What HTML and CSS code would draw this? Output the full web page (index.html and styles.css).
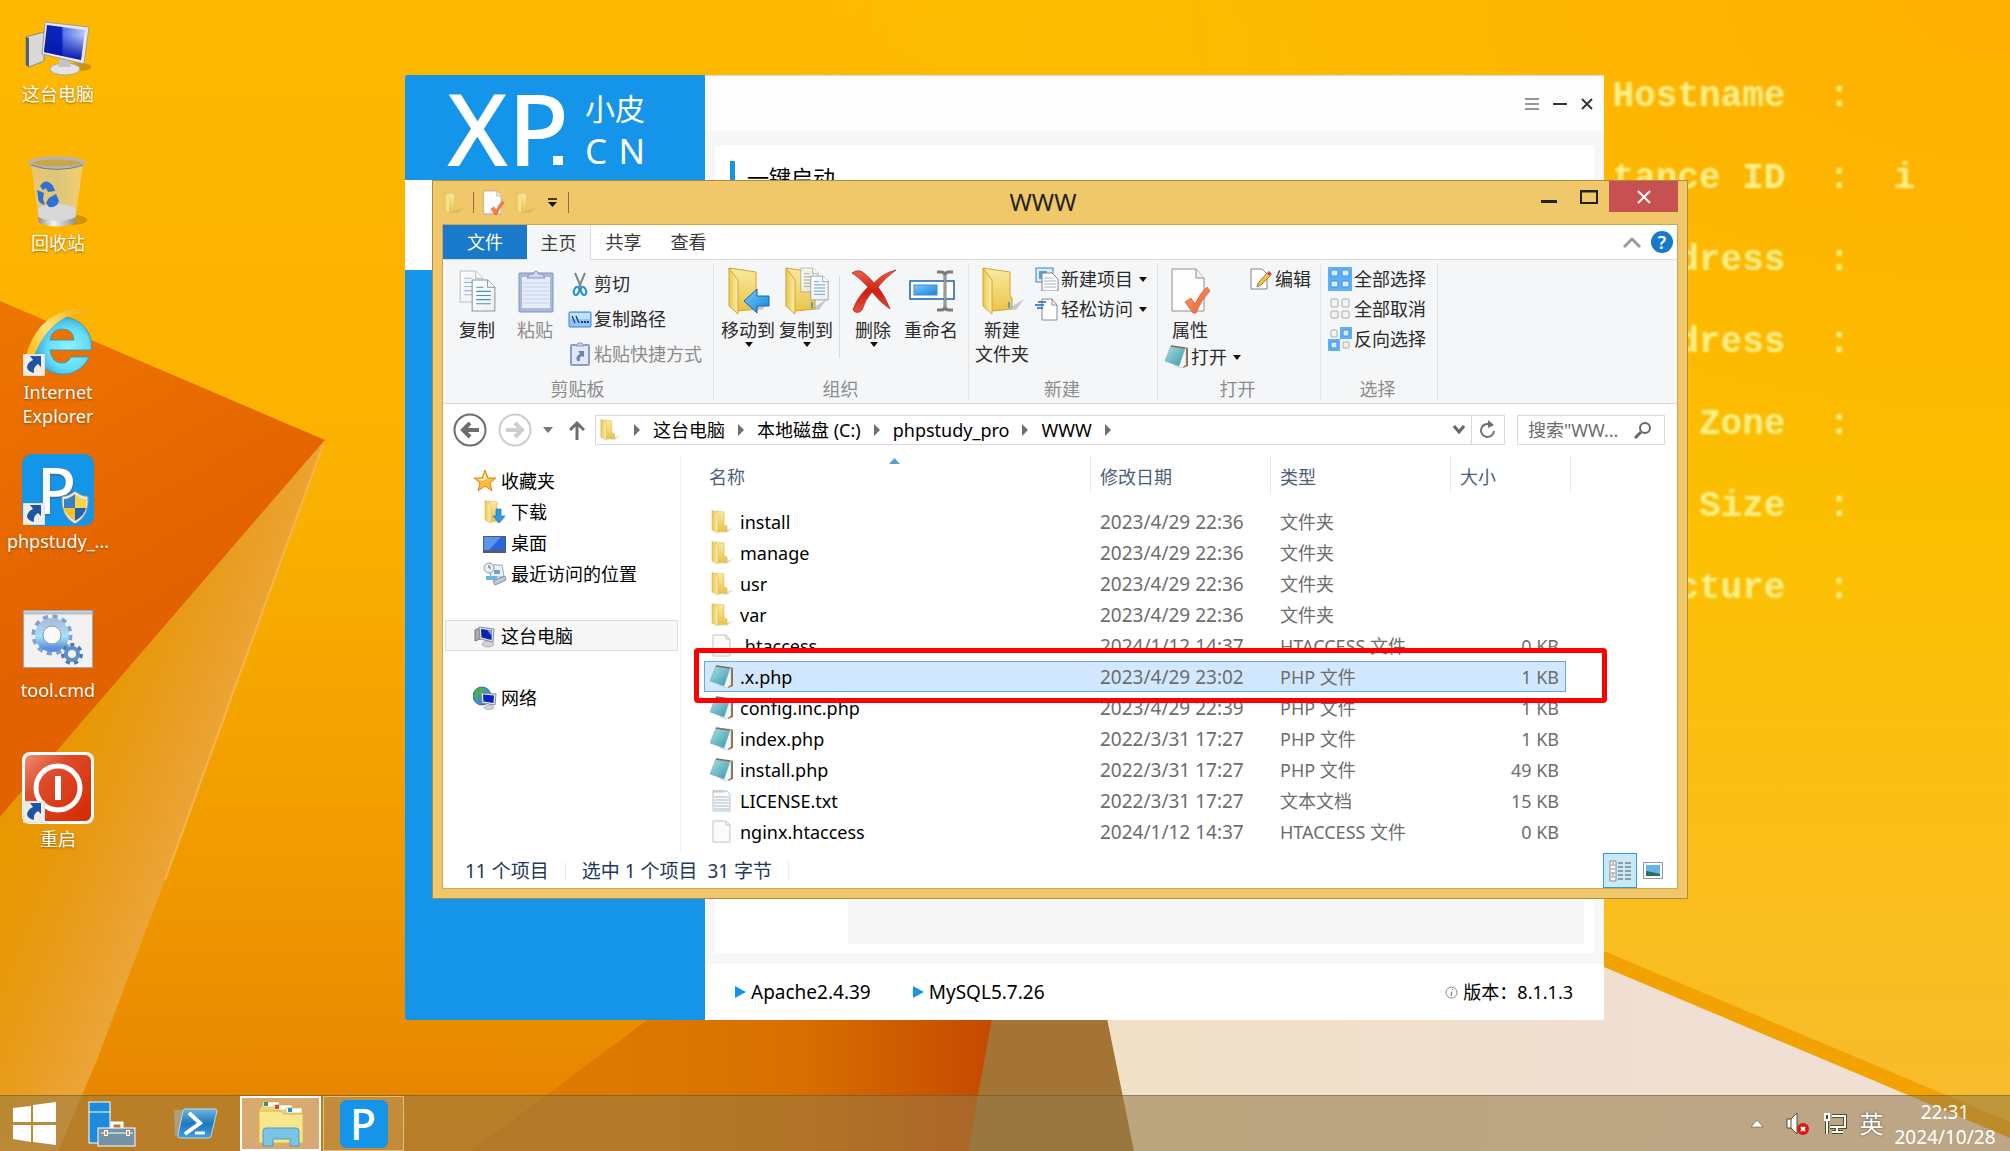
FILE: index.html
```html
<!DOCTYPE html>
<html lang="zh-CN">
<head>
<meta charset="utf-8">
<title>WWW</title>
<link rel="stylesheet" href="styles.css">
</head>
<body>

<!-- Shared gradients and icon symbols -->
<svg class="sprite" aria-hidden="true">
  <defs>
    <linearGradient id="gFolderFront" x1="0" y1="0" x2="1" y2="0"><stop offset="0" stop-color="#e9c64d"/><stop offset="1" stop-color="#fdf0ae"/></linearGradient>
    <linearGradient id="gFolderBack" x1="0" y1="0" x2="0" y2="1"><stop offset="0" stop-color="#fbeaa2"/><stop offset="1" stop-color="#e9c448"/></linearGradient>
    <linearGradient id="gSky" x1="0" y1="0" x2="1" y2="1"><stop offset="0" stop-color="#7cc8fb"/><stop offset="1" stop-color="#0f86dc"/></linearGradient>
    <linearGradient id="gScreen" x1="0" y1="0" x2="1" y2="0"><stop offset="0" stop-color="#0a22a8"/><stop offset=".42" stop-color="#0b22c4"/><stop offset=".48" stop-color="#5a78e8"/><stop offset="1" stop-color="#b9c8fa"/></linearGradient>
    <linearGradient id="gScreenFade" x1="0" y1="0" x2="0" y2="1"><stop offset=".3" stop-color="#0a18b0" stop-opacity="0"/><stop offset="1" stop-color="#0512a8"/></linearGradient>
    <linearGradient id="gMetal" x1="0" y1="0" x2="1" y2="0"><stop offset="0" stop-color="#8d8d8d"/><stop offset=".4" stop-color="#f4f4f4"/><stop offset="1" stop-color="#8f8f8f"/></linearGradient>
    <linearGradient id="gTeal" x1="0" y1="0" x2="1" y2="1"><stop offset="0" stop-color="#b5e0e6"/><stop offset="1" stop-color="#2f97a9"/></linearGradient>
    <radialGradient id="gIE" cx=".6" cy=".55" r=".6"><stop offset="0" stop-color="#8ff4ff"/><stop offset=".6" stop-color="#66dcf8"/><stop offset="1" stop-color="#2fa5dd"/></radialGradient>
    <linearGradient id="gGold" x1="0" y1="1" x2="1" y2="0"><stop offset="0" stop-color="#ffb400"/><stop offset=".5" stop-color="#ffe27a"/><stop offset="1" stop-color="#f5a800"/></linearGradient>
    <linearGradient id="gGear" x1="0" y1="0" x2="0" y2="1"><stop offset="0" stop-color="#a9bfe2"/><stop offset=".55" stop-color="#a6e3f6"/><stop offset="1" stop-color="#5d8fe0"/></linearGradient>
    <linearGradient id="gRed" x1="0" y1="0" x2="1" y2="1"><stop offset="0" stop-color="#f08a70"/><stop offset=".35" stop-color="#de4a2a"/><stop offset="1" stop-color="#d22a00"/></linearGradient>
    <linearGradient id="gCross" x1="0" y1="0" x2="0" y2="1"><stop offset="0" stop-color="#f0604a"/><stop offset=".5" stop-color="#cf1f12"/><stop offset="1" stop-color="#e8503c"/></linearGradient>
    <linearGradient id="gPaper" x1="0" y1="0" x2="1" y2="1"><stop offset="0" stop-color="#fff"/><stop offset="1" stop-color="#eceff2"/></linearGradient>
    <linearGradient id="gBin" x1="0" y1="0" x2="1" y2="0"><stop offset="0" stop-color="#e8c86e"/><stop offset=".5" stop-color="#dcc67e"/><stop offset="1" stop-color="#f3cd6c"/></linearGradient>
    <linearGradient id="gPs" x1="0" y1="0" x2="0" y2="1"><stop offset="0" stop-color="#6db4e2"/><stop offset=".5" stop-color="#1f78bd"/><stop offset="1" stop-color="#3fa0dc"/></linearGradient>
    <linearGradient id="gOrange" x1="0" y1="0" x2="1" y2="1"><stop offset="0" stop-color="#ff9b5c"/><stop offset="1" stop-color="#e5603a"/></linearGradient>
  </defs>

  <symbol id="folder" viewBox="0 0 24 24">
    <path d="M12 22 L24 17 L17 23 Z" fill="#999" opacity=".35"/>
    <path d="M5 1 L14 2 V15 L17 16 V21 L8 22 Z" fill="url(#gFolderBack)" stroke="#d9b650" stroke-width=".6"/>
    <path d="M2 0 L8 4 V23 L2 20 Z" fill="url(#gFolderFront)" stroke="#dcbb58" stroke-width=".6"/>
  </symbol>
  <symbol id="folder-big" viewBox="0 0 42 48">
    <path d="M26 42 L42 32 L34 43 Z" fill="#777" opacity=".35"/>
    <path d="M1 1 L28 5 V29 L30 31 V42 L10 44 Z" fill="url(#gFolderBack)" stroke="#d3a52c"/>
    <path d="M1 1 L10 13 V47 L1 39 Z" fill="url(#gFolderFront)" stroke="#d3a52c"/>
    <path d="M27 35 v6" stroke="#49a2e8" stroke-width="2"/>
  </symbol>
  <symbol id="page" viewBox="0 0 24 32">
    <path d="M1 1 H16 L23 8 V31 H1 Z" fill="url(#gPaper)" stroke="#8d9399"/>
    <path d="M16 1 V8 H23" fill="#fff" stroke="#8d9399"/>
    <path d="M5 8 h7 M5 12 h14 M5 16 h14 M5 20 h14 M5 24 h14" stroke="#4b8cc7"/>
  </symbol>
  <symbol id="copy" viewBox="0 0 38 42">
    <g opacity=".55"><use href="#page" x="0" y="0" width="25" height="33"/></g>
    <use href="#page" x="12" y="9" width="25" height="33"/>
  </symbol>
  <symbol id="paste" viewBox="0 0 36 44">
    <rect x="1" y="4" width="34" height="39" rx="1" fill="#a9b9d9" stroke="#8395bd"/>
    <rect x="4" y="8" width="28" height="31" fill="#e6edfa"/>
    <path d="M5 14h26M5 18h26M5 22h26M5 26h26M5 30h26M5 34h26" stroke="#c3d0e8"/>
    <path d="M9 9 L12 5 H15 Q18 -1 21 5 H24 L27 9 Z" fill="#cfd9eb" stroke="#8395bd"/>
  </symbol>
  <symbol id="cut" viewBox="0 0 24 24">
    <path d="M7 1 L13 15 M17 1 L11 15" stroke="#7d8791" stroke-width="2" fill="none"/>
    <ellipse cx="8.500" cy="19" rx="2.500" ry="4" transform="rotate(20 8.500 19)" fill="none" stroke="#1c93d2" stroke-width="2"/>
    <ellipse cx="15.500" cy="19" rx="2.500" ry="4" transform="rotate(-20 15.500 19)" fill="none" stroke="#1c93d2" stroke-width="2"/>
  </symbol>
  <symbol id="path" viewBox="0 0 24 24">
    <rect x="1" y="5" width="22" height="15" rx="1" fill="#8fc5fb" stroke="#3f83d0"/>
    <rect x="2" y="6" width="20" height="6" fill="#c0e0ff"/>
    <path d="M4 9 l3 7 M8 9 l3 7" stroke="#163a66" stroke-width="1.300"/>
    <path d="M13 15h2M16 15h2M19 15h2" stroke="#163a66" stroke-width="2"/>
  </symbol>
  <symbol id="paste-link" viewBox="0 0 24 24">
    <rect x="3" y="3" width="18" height="20" rx="1" fill="#e2e9f6" stroke="#8c9cc4" stroke-width="2"/>
    <path d="M8 4 L10 1 H14 L16 4 Z" fill="#c6d0e6" stroke="#8c9cc4"/>
    <path d="M9 19 Q7 14 12 12 L10 9 H16 V15 L14 14 Q11 15 12 19 Z" fill="#6e82ad"/>
  </symbol>
  <symbol id="move-to" viewBox="0 0 42 48">
    <use href="#folder-big" width="42" height="48"/>
    <path d="M16 34 L29 22 V29 H41 V39 H29 V46 Z" fill="url(#gSky)" stroke="#0e66b0"/>
  </symbol>
  <symbol id="copy-to" viewBox="0 0 44 48">
    <use href="#folder-big" width="42" height="48"/>
    <g opacity=".75"><use href="#page" x="15" y="0" width="19" height="26"/></g>
    <use href="#page" x="25" y="8" width="19" height="26"/>
  </symbol>
  <symbol id="delete" viewBox="0 0 46 44">
    <path d="M1 4 Q8 -1 14 5 Q20 10 23 14 Q32 4 45 1 Q34 9 27 18 Q34 27 39 40 Q30 34 21 23 Q14 31 11 41 Q6 46 2 41 Q5 30 17 18 Q9 9 1 4Z" fill="url(#gCross)" stroke="#a51a10" stroke-width=".7"/>
  </symbol>
  <symbol id="rename" viewBox="0 0 46 42">
    <rect x="1" y="11" width="44" height="18" fill="#fff" stroke="#1762a5" stroke-width="1.500"/>
    <rect x="5" y="15" width="23" height="10" fill="url(#gSky)" stroke="#3e8bcb"/>
    <path d="M28 2 H32 Q36 2 36 6 Q36 2 40 2 H44 M36 5 V37 M28 40 H32 Q36 40 36 36 Q36 40 40 40 H44" fill="none" stroke="#7b7b7b" stroke-width="3"/>
    <path d="M36 5 V37" stroke="#b8b8b8" stroke-width="1"/>
  </symbol>
  <symbol id="new-item" viewBox="0 0 24 24">
    <rect x="1" y="1" width="17" height="14" fill="#d9ecfb" stroke="#3a86c8"/>
    <path d="M4 4 h8 v8 h-8z" fill="#5d9fd8"/>
    <path d="M7 6 H17 L23 12 V24 H7 Z" fill="#fff" stroke="#7d858c"/>
    <path d="M9 11h8M9 14h12M9 17h12M9 20h12" stroke="#a9b4bd"/>
  </symbol>
  <symbol id="easy-access" viewBox="0 0 24 24">
    <path d="M7 2 H17 L22 8 V23 H7 Z" fill="#fff" stroke="#858c92"/>
    <path d="M17 2 V8 H22" fill="none" stroke="#858c92"/>
    <path d="M3 5h8M0 8h9M2 11h6" stroke="#1769c4" stroke-width="1.300"/>
  </symbol>
  <symbol id="properties" viewBox="0 0 40 48">
    <path d="M1 2 H25 L33 11 V44 H1 Z" fill="#fdfdfd" stroke="#8b9094"/>
    <path d="M25 2 V11 H33" fill="#f0f0f0" stroke="#8b9094"/>
    <path d="M14 35 L20 31 L24 37 Q29 26 36 20 L39 24 Q30 33 25 46 H22 Z" fill="url(#gOrange)" stroke="#d9572f" stroke-width=".7"/>
  </symbol>
  <symbol id="notepad" viewBox="0 0 24 24">
    <path d="M20 2 L23 3 L23 21 L18 23 Z" fill="#8d6f45"/>
    <path d="M18 2 L21 3 L21 20 L16 23 L10 21 Z" fill="#f2f5f6" stroke="#aab3b6" stroke-width=".5"/>
    <path d="M6 1 L20 3 L14 21 L0 16 Z" fill="url(#gTeal)" stroke="#6ba9b3" stroke-width=".6"/>
    <path d="M6 1 L20 3" stroke="#7e6f58" stroke-width="1.500"/>
  </symbol>
  <symbol id="edit" viewBox="0 0 24 24">
    <path d="M2 2 H13 L18 7 V22 H2 Z" fill="#fff" stroke="#7f868c"/>
    <path d="M8 20 L9 16 L18 6 L21 9 L12 18 Z" fill="#f3c44a" stroke="#8a6a25" stroke-width=".8"/>
    <path d="M18 6 l2 -2 l3 3 l-2 2z" fill="#d8485c"/>
  </symbol>
  <symbol id="select-all" viewBox="0 0 24 24">
    <rect width="24" height="24" fill="#5fb0fb"/>
    <g fill="#d8edff" stroke="#3a8fe2"><rect x="3" y="3" width="7" height="6" rx="1"/><rect x="14" y="3" width="7" height="6" rx="1"/><rect x="3" y="14" width="7" height="6" rx="1"/><rect x="14" y="14" width="7" height="6" rx="1"/></g>
  </symbol>
  <symbol id="select-none" viewBox="0 0 24 24">
    <g fill="#f3f3f3" stroke="#ababab"><rect x="3" y="2" width="7" height="8" rx="1"/><rect x="14" y="2" width="7" height="8" rx="1"/><rect x="3" y="14" width="7" height="7" rx="1"/><rect x="14" y="14" width="7" height="7" rx="1"/></g>
  </symbol>
  <symbol id="select-invert" viewBox="0 0 24 24">
    <rect x="12" width="12" height="12" fill="#5fb0fb"/><rect y="12" width="12" height="12" fill="#5fb0fb"/>
    <g fill="#f3f3f3" stroke="#ababab"><rect x="3" y="3" width="6" height="7" rx="1"/><rect x="15" y="15" width="6" height="6" rx="1"/></g>
    <g fill="#d8edff" stroke="#3a8fe2"><rect x="15" y="3" width="6" height="6" rx="1"/><rect x="3" y="15" width="6" height="6" rx="1"/></g>
  </symbol>
  <symbol id="star" viewBox="0 0 24 24">
    <path d="M12 1 L15 9 L23 9 L17 14 L19 22 L12 17 L5 22 L7 14 L1 9 L9 9 Z" fill="#fdbb3c" stroke="#e0861a" stroke-linejoin="round"/>
    <path d="M12 4 L14 10 L9 12 L5 10 L10 10 Z" fill="#fff0b8"/>
  </symbol>
  <symbol id="downloads" viewBox="0 0 24 24">
    <use href="#folder" width="24" height="24"/>
    <path d="M13 9 H18 V16 H22 L16 23 L10 16 H13 Z" fill="#2c9ae6" stroke="#0d68b5" stroke-width=".6"/>
  </symbol>
  <symbol id="desktop" viewBox="0 0 24 24">
    <rect x="0" y="5" width="23" height="17" fill="#4d5d78"/>
    <rect x="1" y="6" width="21" height="13" fill="#2a66d8"/>
    <path d="M1 6 H18 L6 19 H1 Z" fill="#5c94ec"/>
  </symbol>
  <symbol id="recent" viewBox="0 0 24 24">
    <path d="M6 3 H19 L21 15 H8 Z" fill="#eef3f7" stroke="#9aa7b0"/>
    <circle cx="6" cy="6" r="5" fill="#e9eff4" stroke="#8fa0ad"/>
    <path d="M6 3v3h2" fill="none" stroke="#4f6473"/>
    <path d="M3 14 H14 V18 H3 Z" fill="#69b8d6"/>
    <path d="M10 19 L22 14 L23 18 L12 23 Z" fill="#c3c9ce" stroke="#87919a"/>
    <path d="M11 8h6v4h-6z" fill="#6ea5cf"/>
  </symbol>
  <symbol id="pc" viewBox="0 0 66 56">
    <ellipse cx="54" cy="46" rx="13" ry="4" fill="#8a6410" opacity=".4"/>
    <path d="M1 16 L19 11 V40 L4 46 L1 44 Z" fill="#d9d9d9" stroke="#8a8a8a"/>
    <path d="M1 16 L4 17 V46 L1 44 Z" fill="#555f66"/>
    <ellipse cx="40" cy="48" rx="15" ry="6" fill="#e3e3e3" stroke="#a9a9a9"/>
    <path d="M35 38 h9 l2 8 h-13z" fill="#c4c4c4"/>
    <path d="M20 1 L64 6 L59 43 L17 33 Z" fill="#e6e6e6" stroke="#9c9c9c"/>
    <path d="M22 4 L60 9 L56 39 L19 31 Z" fill="url(#gScreen)"/>
    <path d="M22 4 L60 9 L56 39 L19 31 Z" fill="url(#gScreenFade)"/>
  </symbol>
  <symbol id="pc-small" viewBox="0 0 24 24">
    <path d="M2 6 L7 4 V15 L2 17 Z" fill="#a9adb2" stroke="#777"/>
    <ellipse cx="15" cy="20" rx="6" ry="3" fill="#d2d2d2" stroke="#999" stroke-width=".6"/>
    <path d="M6 3 L21 5 L20 18 L7 15 Z" fill="#e3e5e8" stroke="#858d94"/>
    <path d="M8 5 L19 6.500 L18.500 16 L8.500 13.500 Z" fill="#0b20b4"/>
    <path d="M14 5.700 L19 6.500 L18.700 12 Z" fill="#7f95ea"/>
  </symbol>
  <symbol id="network" viewBox="0 0 24 24">
    <circle cx="9" cy="10" r="9" fill="#3f8fd2" stroke="#2d6ba4"/>
    <path d="M3 4 Q9 0 12 3 Q9 8 6 8 Q6 13 3 14 Q-1 9 3 4Z" fill="#4fae4b"/>
    <path d="M8 7 L23 8 L22 19 L9 17 Z" fill="#e5e8ea" stroke="#858d94"/>
    <path d="M10 8.500 L21 9.500 L20.500 17 L10.500 15.500 Z" fill="#0d25c0"/>
    <ellipse cx="16" cy="21.500" rx="5" ry="2" fill="#d5d5d5" stroke="#999" stroke-width=".6"/>
  </symbol>
  <symbol id="file" viewBox="0 0 24 24">
    <path d="M3 1 H16 L20 5 V22 H3 Z" fill="#fbfbf9" stroke="#c3c3c0"/>
    <path d="M16 1 V5 H20" fill="none" stroke="#c3c3c0"/>
  </symbol>
  <symbol id="text-file" viewBox="0 0 24 24">
    <path d="M3 2 H17 L20 5 V22 H3 Z" fill="#f8fafb" stroke="#bcc1c4"/>
    <path d="M4 1v3M7 1v3M10 1v3M13 1v3" stroke="#aab1b6"/>
    <path d="M4 8h15M4 11h15M4 14h15M4 17h15M4 20h15" stroke="#a9bdd1"/>
  </symbol>
  <symbol id="shortcut" viewBox="0 0 22 22">
    <rect width="22" height="22" fill="#f1ece6" stroke="#c5b9a8" stroke-width=".5"/>
    <path d="M7 2 H18 V13 L15 10 Q10 13 11 19 Q4 17 4 13 Q5 8 10 6 Z" fill="#1d55a5"/>
  </symbol>
  <symbol id="caret-down" viewBox="0 0 8 5"><path d="M0 0 H8 L4 5 Z" fill="currentColor"/></symbol>
  <symbol id="caret-right" viewBox="0 0 6 12"><path d="M0 0 L6 6 L0 12 Z" fill="currentColor"/></symbol>
</svg>

<main class="desktop">
  <!-- Wallpaper -->
  <svg class="wallpaper" viewBox="0 0 2010 1151" preserveAspectRatio="none" aria-hidden="true">
    <defs>
      <linearGradient id="wBase" x1="0" y1="0" x2="0" y2="1"><stop offset="0" stop-color="#ffb900"/><stop offset=".45" stop-color="#fab000"/><stop offset=".75" stop-color="#f09a00"/><stop offset="1" stop-color="#e68200"/></linearGradient>
      <linearGradient id="wRight" x1="0" y1="0" x2="0" y2="1"><stop offset="0" stop-color="#fdbf00"/><stop offset=".45" stop-color="#fcc000"/><stop offset=".8" stop-color="#f9be1e"/><stop offset="1" stop-color="#f8ba30"/></linearGradient>
      <linearGradient id="wMask" x1="0" y1="0" x2="1" y2="0"><stop offset="0" stop-color="#000"/><stop offset="1" stop-color="#fff"/></linearGradient>
      <mask id="wFade"><rect x="700" width="600" height="1151" fill="url(#wMask)"/><rect x="1299" width="711" height="1151" fill="#fff"/></mask>
      <radialGradient id="wCorner" cx="1" cy="0" r=".5"><stop offset="0" stop-color="#ffa800" stop-opacity=".7"/><stop offset="1" stop-color="#ffa800" stop-opacity="0"/></radialGradient>
      <linearGradient id="wDark" gradientUnits="userSpaceOnUse" x1="0" y1="330" x2="160" y2="620"><stop offset="0" stop-color="#ee7400"/><stop offset=".6" stop-color="#e66800"/><stop offset="1" stop-color="#e26100"/></linearGradient>
      <linearGradient id="wFold" gradientUnits="userSpaceOnUse" x1="70" y1="730" x2="220" y2="790"><stop offset="0" stop-color="#e89800"/><stop offset=".35" stop-color="#e89a14"/><stop offset="1" stop-color="#eca63e"/></linearGradient>
      <linearGradient id="wFlame" gradientUnits="userSpaceOnUse" x1="600" y1="0" x2="990" y2="0"><stop offset="0" stop-color="#dd7a00"/><stop offset=".5" stop-color="#d87000"/><stop offset="1" stop-color="#c64a00"/></linearGradient>
      <linearGradient id="wCream" gradientUnits="userSpaceOnUse" x1="1107" y1="0" x2="1700" y2="0"><stop offset="0" stop-color="#f0e0c6"/><stop offset="1" stop-color="#f0dfd3"/></linearGradient>
    </defs>
    <rect width="2010" height="1151" fill="url(#wBase)"/>
    <rect width="2010" height="1151" fill="url(#wRight)" mask="url(#wFade)"/>
    <rect width="2010" height="1151" fill="url(#wCorner)"/>
    <path d="M0 301 L325 440 L0 817 Z" fill="url(#wDark)"/>
    <path d="M325 440 L0 817 V1151 H58 L97 1060 L165 880 Z" fill="url(#wFold)"/>
    <path d="M323 445 L165 880" stroke="#f6b550" stroke-width="2"/>
    <path d="M650 1018 L540 1100 L470 1151 H980 L992 1018 Z" fill="url(#wFlame)"/>
    <path d="M992 1018 H1107 L1134 1151 H968 Z" fill="#a37436"/>
    <path d="M1107 1018 L1604 966 L2010 1137 V1151 H1134 Z" fill="url(#wCream)"/>
    <path d="M1604 951 L2010 1122 V1138 L1604 967 Z" fill="#f2a302"/>
  </svg>
  <pre class="host-info">Hostname  :   
tance ID  :  i
dress  :   
dress  :   
Zone  :   
Size  :   
cture  :   </pre>

  <nav class="shortcuts" aria-label="桌面">
    <a class="shortcut" href="#"><span class="shortcut-icon shortcut-low"><svg width="66" height="56"><use href="#pc"/></svg></span>这台电脑</a>
    <a class="shortcut" href="#"><span class="shortcut-icon">
      <svg width="60" height="72" viewBox="0 0 60 72">
        <ellipse cx="46" cy="64" rx="13" ry="5" fill="#8a6410" opacity=".4"/>
        <path d="M3 8 L11 66 Q29 74 47 66 L55 8 Z" fill="url(#gBin)"/>
        <path d="M10 52 L11 66 Q29 74 47 66 L48 52 Q29 44 10 52" fill="#d8d8d8"/>
        <path d="M10 61 Q29 69 48 61 L47 67 Q29 74 11 67Z" fill="url(#gMetal)"/>
        <ellipse cx="29" cy="7" rx="27" ry="5" fill="#c9a648" stroke="#b5b5b5" stroke-width="3"/>
        <path d="M3 9 Q29 18 55 9" fill="none" stroke="#7d7d7d"/>
        <g fill="#2f6fd6"><path d="M12 30 Q18 21 25 30 L27 35 L20 36 L18 32 L15 34Z"/><path d="M9 34 L16 37 L15 43 L17 49 Q9 47 10 40Z"/><path d="M21 42 L28 38 L31 45 Q29 52 21 51 L18 47Z"/></g>
      </svg></span>回收站</a>
    <a class="shortcut" href="#"><span class="shortcut-icon">
      <svg width="72" height="72" viewBox="0 0 72 72">
        <path fill-rule="evenodd" d="M69 45 A28.500 28.500 0 1 0 67 52 H49 Q46 58 40 58 Q30 58 28 45 Z M28 35 Q30 24 40 24 Q51 24 52 35 Z" fill="url(#gIE)" stroke="#2f9ccf"/>
        <path d="M3 54 Q14 10 52 4 Q66 2 67 12 Q60 5 46 11 Q22 22 10 56 Z" fill="url(#gGold)"/>
        <use href="#shortcut" x="1" y="49" width="22" height="22"/>
      </svg></span>Internet Explorer</a>
    <a class="shortcut" href="#"><span class="shortcut-icon">
      <svg width="72" height="72" viewBox="0 0 72 72">
        <rect width="72" height="72" rx="10" fill="#1595e9"/>
        <text class="logo-letter" x="15" y="60" font-size="64">P</text>
        <path d="M53 37 Q60 43 66 42 Q68 62 53 70 Q38 62 40 42 Q46 43 53 37Z" fill="#e7ebee" stroke="#8d8d80"/>
        <path d="M53 40 Q47 45 42 45 V54 H53Z" fill="#3b80c4"/><path d="M53 40 Q59 45 64 45 V54 H53Z" fill="#f7d64f"/>
        <path d="M42 54 H53 V67 Q43 61 42 54Z" fill="#f2c32c"/><path d="M64 54 H53 V67 Q63 61 64 54Z" fill="#2462ae"/>
        <use href="#shortcut" x="1" y="49" width="22" height="22"/>
      </svg></span>phpstudy_...</a>
    <a class="shortcut" href="#"><span class="shortcut-icon">
      <svg width="70" height="58" viewBox="0 0 70 58">
        <rect x="0" y="0" width="70" height="58" fill="#f2f2f2" stroke="#9fa7b3" stroke-width="2"/>
        <path d="M1 3 H69" stroke="#b7c2cf" stroke-width="3"/>
        <circle cx="29" cy="25" r="18" fill="none" stroke="#7ea2d4" stroke-width="5" stroke-dasharray="5 4.420"/>
        <circle cx="29" cy="25" r="13" fill="none" stroke="url(#gGear)" stroke-width="8"/>
        <circle cx="29" cy="25" r="9" fill="#fafafa" stroke="#8b9db5"/>
        <circle cx="49" cy="44" r="9" fill="none" stroke="#4779b5" stroke-width="4" stroke-dasharray="4 4.080"/>
        <circle cx="49" cy="44" r="6" fill="#f5f5f5" stroke="#5f90c8" stroke-width="4"/>
      </svg></span>tool.cmd</a>
    <a class="shortcut" href="#"><span class="shortcut-icon">
      <svg width="72" height="72" viewBox="0 0 72 72">
        <rect width="72" height="72" rx="8" fill="#fff"/>
        <rect x="3" y="3" width="66" height="66" rx="6" fill="url(#gRed)"/>
        <circle cx="36" cy="36" r="22" fill="none" stroke="#fff" stroke-width="5"/>
        <rect x="33" y="24" width="6" height="24" fill="#fff"/>
        <use href="#shortcut" x="1" y="49" width="22" height="22"/>
      </svg></span>重启</a>
  </nav>

  <!-- phpStudy panel, behind the file browser -->
  <section class="panel" aria-label="phpStudy">
    <aside class="panel-side">
      <div class="brand"><span class="brand-xp">XP</span><span class="brand-dot"></span>
        <span class="brand-sub"><span>小皮</span><span class="brand-cn"><span>C</span><span>N</span></span></span>
      </div>
      <div class="side-active"></div>
    </aside>
    <div class="panel-main">
      <header class="panel-bar">
        <button aria-label="菜单"><svg width="14" height="14"><path d="M0 2h14M0 7h14M0 12h14" stroke="#333"/></svg></button>
        <button aria-label="最小化"><svg width="14" height="14"><path d="M0 7h14" stroke="#333" stroke-width="2"/></svg></button>
        <button aria-label="关闭"><svg width="12" height="14"><path d="M1 2L11 12M11 2L1 12" stroke="#333" stroke-width="2"/></svg></button>
      </header>
      <div class="panel-body">
        <div class="card"><h2>一键启动</h2><div class="card-log"></div></div>
      </div>
      <footer class="panel-foot">
        <span class="service"><svg width="11" height="12"><path d="M0 0L11 6L0 12Z" fill="#1595e9"/></svg>Apache2.4.39</span>
        <span class="service"><svg width="11" height="12"><path d="M0 0L11 6L0 12Z" fill="#1595e9"/></svg>MySQL5.7.26</span>
        <span class="version"><svg width="13" height="13" viewBox="0 0 13 13"><circle cx="6.500" cy="6.500" r="5.500" fill="none" stroke="#888"/><path d="M7.500 3v1M7 5.500L6 10" stroke="#666"/></svg>版本：8.1.1.3</span>
      </footer>
    </div>
  </section>

  <!-- File browser window -->
  <section class="explorer" aria-label="WWW">
    <header class="titlebar">
      <div class="quick">
        <svg width="22" height="26"><use href="#folder"/></svg><i></i>
        <button aria-label="属性"><svg width="22" height="26"><use href="#properties"/></svg></button>
        <button aria-label="新建文件夹"><svg width="22" height="26"><use href="#folder"/></svg></button>
        <button aria-label="自定义"><svg width="9" height="9"><path d="M0 1h9" stroke="#111" stroke-width="1.500"/><path d="M0 4h9L4.500 9Z" fill="#111"/></svg></button><i></i>
      </div>
      <h1>WWW</h1>
      <div class="controls">
        <button aria-label="最小化"><svg width="16" height="4"><rect width="16" height="3" fill="#222"/></svg></button>
        <button aria-label="最大化"><svg width="18" height="14"><path d="M1 1H17V13H1Z" fill="none" stroke="#222" stroke-width="2"/><path d="M0 2H18" stroke="#222"/></svg></button>
        <button class="close" aria-label="关闭"><svg width="14" height="14"><path d="M1 1L13 13M13 1L1 13" stroke="#fff" stroke-width="2"/></svg></button>
      </div>
    </header>

    <div class="client">
      <div class="tabs">
        <button class="tab tab-file">文件</button>
        <button class="tab tab-active">主页</button>
        <button class="tab">共享</button>
        <button class="tab">查看</button>
        <div class="tab-tools">
          <button aria-label="折叠"><svg width="18" height="14"><path d="M1 12L9 4L17 12" fill="none" stroke="#999" stroke-width="3"/></svg></button>
          <button class="help" aria-label="帮助">?</button>
        </div>
      </div>

      <div class="ribbon">
        <div class="group group-clip">
          <div class="tools">
            <button class="big"><span><svg width="38" height="42"><use href="#copy"/></svg></span>复制</button>
            <button class="big dim"><span><svg width="36" height="44"><use href="#paste"/></svg></span>粘贴</button>
            <div class="stack stack-loose">
              <button class="small"><svg width="24" height="24"><use href="#cut"/></svg>剪切</button>
              <button class="small"><svg width="24" height="24"><use href="#path"/></svg>复制路径</button>
              <button class="small dim"><svg width="24" height="24"><use href="#paste-link"/></svg>粘贴快捷方式</button>
            </div>
          </div>
          <p>剪贴板</p>
        </div>
        <div class="group group-organize">
          <div class="tools">
            <button class="big"><span><svg width="42" height="48"><use href="#move-to"/></svg></span>移动到<svg class="caret" width="8" height="5"><use href="#caret-down"/></svg></button>
            <button class="big"><span><svg width="44" height="48"><use href="#copy-to"/></svg></span>复制到<svg class="caret" width="8" height="5"><use href="#caret-down"/></svg></button>
            <i class="divider"></i>
            <button class="big"><span><svg width="46" height="44"><use href="#delete"/></svg></span>删除<svg class="caret" width="8" height="5"><use href="#caret-down"/></svg></button>
            <button class="big"><span><svg width="46" height="42"><use href="#rename"/></svg></span>重命名</button>
          </div>
          <p>组织</p>
        </div>
        <div class="group group-new">
          <div class="tools">
            <button class="big"><span><svg width="42" height="48"><use href="#folder-big"/></svg></span>新建<br>文件夹</button>
            <div class="stack">
              <button class="small"><svg width="24" height="24"><use href="#new-item"/></svg>新建项目<svg class="caret" width="8" height="5"><use href="#caret-down"/></svg></button>
              <button class="small"><svg width="24" height="24"><use href="#easy-access"/></svg>轻松访问<svg class="caret" width="8" height="5"><use href="#caret-down"/></svg></button>
            </div>
          </div>
          <p>新建</p>
        </div>
        <div class="group group-open">
          <div class="tools">
            <div class="open-column">
              <button class="big"><span><svg width="40" height="48"><use href="#properties"/></svg></span>属性</button>
              <button class="small"><svg width="24" height="24"><use href="#notepad"/></svg>打开<svg class="caret" width="8" height="5"><use href="#caret-down"/></svg></button>
            </div>
            <div class="stack">
              <button class="small"><svg width="24" height="24"><use href="#edit"/></svg>编辑</button>
            </div>
          </div>
          <p>打开</p>
        </div>
        <div class="group group-select">
          <div class="tools">
            <div class="stack">
              <button class="small"><svg width="24" height="24"><use href="#select-all"/></svg>全部选择</button>
              <button class="small"><svg width="24" height="24"><use href="#select-none"/></svg>全部取消</button>
              <button class="small"><svg width="24" height="24"><use href="#select-invert"/></svg>反向选择</button>
            </div>
          </div>
          <p>选择</p>
        </div>
      </div>

      <div class="navbar">
        <button class="nav-back" aria-label="后退"><svg width="34" height="34"><circle cx="17" cy="17" r="15.500" fill="none" stroke="#6d6d6d" stroke-width="2"/><path d="M26 17H11M17 10L10 17L17 24" fill="none" stroke="#6d6d6d" stroke-width="4"/></svg></button>
        <button class="nav-forward" aria-label="前进"><svg width="34" height="34"><circle cx="17" cy="17" r="15.500" fill="none" stroke="#cdcdcd" stroke-width="2"/><path d="M8 17H23M17 10L24 17L17 24" fill="none" stroke="#cdcdcd" stroke-width="4"/></svg></button>
        <button class="nav-history" aria-label="历史"><svg width="10" height="6"><path d="M0 0H10L5 6Z" fill="#777"/></svg></button>
        <button class="nav-up" aria-label="向上"><svg width="16" height="20"><path d="M8 20V4M1 10L8 3L15 10" fill="none" stroke="#6d6d6d" stroke-width="3"/></svg></button>
        <div class="address">
          <svg width="22" height="24"><use href="#folder"/></svg>
          <svg class="crumb-arrow" width="6" height="12"><use href="#caret-right"/></svg>
          <button>这台电脑</button>
          <svg class="crumb-arrow" width="6" height="12"><use href="#caret-right"/></svg>
          <button>本地磁盘 (C:)</button>
          <svg class="crumb-arrow" width="6" height="12"><use href="#caret-right"/></svg>
          <button>phpstudy_pro</button>
          <svg class="crumb-arrow" width="6" height="12"><use href="#caret-right"/></svg>
          <button>WWW</button>
          <svg class="crumb-arrow" width="6" height="12"><use href="#caret-right"/></svg>
          <div class="address-end">
            <button aria-label="展开"><svg width="12" height="10"><path d="M1 1L6 7L11 1" fill="none" stroke="#666" stroke-width="3"/></svg></button>
            <button class="refresh" aria-label="刷新"><svg width="18" height="20"><path d="M12 5A6.500 6.500 0 1 0 15 11" fill="none" stroke="#707070" stroke-width="2"/><path d="M9 0V8L15 5Z" fill="#707070"/></svg></button>
          </div>
        </div>
        <label class="search"><input type="text" placeholder="搜索&quot;WW..." aria-label="搜索">
          <svg width="18" height="18"><circle cx="11" cy="7" r="5" fill="none" stroke="#666" stroke-width="2"/><path d="M7 11L1 17" stroke="#666" stroke-width="3"/></svg></label>
      </div>

      <div class="content">
        <nav class="tree" aria-label="导航">
          <a href="#"><svg width="24" height="24"><use href="#star"/></svg>收藏夹</a>
          <a href="#" class="child"><svg width="24" height="24"><use href="#downloads"/></svg>下载</a>
          <a href="#" class="child"><svg width="24" height="24"><use href="#desktop"/></svg>桌面</a>
          <a href="#" class="child"><svg width="24" height="24"><use href="#recent"/></svg>最近访问的位置</a>
          <a href="#" class="tree-root tree-current"><svg width="24" height="24"><use href="#pc-small"/></svg>这台电脑</a>
          <a href="#" class="tree-root"><svg width="24" height="24"><use href="#network"/></svg>网络</a>
        </nav>
        <div class="listing">
          <table>
            <colgroup><col class="c-name"><col class="c-date"><col class="c-type"><col class="c-size"><col class="c-end"></colgroup>
            <thead><tr>
              <th><div>名称<svg class="sort" width="11" height="6"><path d="M0 6L5.500 0L11 6Z" fill="#5f9fc4"/></svg></div></th>
              <th><div>修改日期</div></th><th><div>类型</div></th><th colspan="2"><div>大小</div></th>
            </tr></thead>
            <tbody>
              <tr><td><svg width="24" height="24"><use href="#folder"/></svg>install</td><td>2023/4/29 22:36</td><td>文件夹</td><td></td></tr>
              <tr><td><svg width="24" height="24"><use href="#folder"/></svg>manage</td><td>2023/4/29 22:36</td><td>文件夹</td><td></td></tr>
              <tr><td><svg width="24" height="24"><use href="#folder"/></svg>usr</td><td>2023/4/29 22:36</td><td>文件夹</td><td></td></tr>
              <tr><td><svg width="24" height="24"><use href="#folder"/></svg>var</td><td>2023/4/29 22:36</td><td>文件夹</td><td></td></tr>
              <tr><td><svg width="24" height="24"><use href="#file"/></svg>.htaccess</td><td>2024/1/12 14:37</td><td>HTACCESS 文件</td><td>0 KB</td></tr>
              <tr class="selected"><td><svg width="24" height="24"><use href="#notepad"/></svg>.x.php<span class="marker"></span></td><td>2023/4/29 23:02</td><td>PHP 文件</td><td>1 KB</td></tr>
              <tr><td><svg width="24" height="24"><use href="#notepad"/></svg>config.inc.php</td><td>2023/4/29 22:39</td><td>PHP 文件</td><td>1 KB</td></tr>
              <tr><td><svg width="24" height="24"><use href="#notepad"/></svg>index.php</td><td>2022/3/31 17:27</td><td>PHP 文件</td><td>1 KB</td></tr>
              <tr><td><svg width="24" height="24"><use href="#notepad"/></svg>install.php</td><td>2022/3/31 17:27</td><td>PHP 文件</td><td>49 KB</td></tr>
              <tr><td><svg width="24" height="24"><use href="#text-file"/></svg>LICENSE.txt</td><td>2022/3/31 17:27</td><td>文本文档</td><td>15 KB</td></tr>
              <tr><td><svg width="24" height="24"><use href="#file"/></svg>nginx.htaccess</td><td>2024/1/12 14:37</td><td>HTACCESS 文件</td><td>0 KB</td></tr>
            </tbody>
          </table>
        </div>
      </div>

      <footer class="status">
        <span class="status-cell">11 个项目</span>
        <span class="status-cell">选中 1 个项目<span>31 字节</span></span>
        <div class="views">
          <button class="view-on" aria-label="详细信息"><svg width="22" height="22"><path d="M1 1h6v20h-6z" fill="#fff" stroke="#7b8b92"/><path d="M2 5h4M2 9h4M2 13h4M2 17h4" stroke="#7b8b92"/><path d="M9 3h5M16 3h6M9 7h5M16 7h6M9 11h5M16 11h6M9 15h5M16 15h6M9 19h5M16 19h6" stroke="#44565f"/><path d="M3 3h2M3 15h2" stroke="#c85a3a"/></svg></button>
          <button aria-label="大图标"><svg width="20" height="17"><rect x=".5" y=".5" width="19" height="16" fill="#fff" stroke="#8b9ab0"/><rect x="3" y="3" width="14" height="11" fill="#66b4ee"/><path d="M3 9Q9 10 17 12V14H3Z" fill="#2f6d58"/></svg></button>
        </div>
      </footer>
    </div>
  </section>

  <footer class="taskbar">
    <button class="task task-start" aria-label="开始"><svg width="44" height="44" viewBox="0 0 44 44"><path d="M0 6L18 4V20H0ZM20 3L43 0V20H20ZM0 23H18V40L0 37ZM20 23H43V43L20 40Z" fill="#fff"/></svg></button>
    <button class="task" aria-label="服务器管理器"><svg width="48" height="46" viewBox="0 0 48 46"><rect x="1" y="1" width="21" height="41" fill="#1d8bdc" stroke="#fff"/><path d="M1 11H22" stroke="#fff"/><path d="M24 27V22H34V27" fill="none" stroke="#fff" stroke-width="3"/><rect x="10" y="27" width="37" height="18" fill="#7692a6" stroke="#fff"/><path d="M13 32H45" stroke="#fff"/><path d="M18 29v6M40 29v6" stroke="#fff" stroke-width="4"/><path d="M18 30v4M40 30v4" stroke="#c9762c" stroke-width="1.500"/></svg></button>
    <button class="task" aria-label="PowerShell"><svg width="44" height="32" viewBox="0 0 44 32"><path d="M0 2H10L5 28H1Z" fill="#9fc7dc" opacity=".45"/><path d="M11 1H41Q43 1 43 3L37 28Q37 30 34 30H6Q3 30 4 27L9 3Q9 1 11 1Z" fill="url(#gPs)" stroke="#b5d9ec"/><path d="M15 5L26 15L11 26" fill="none" stroke="#fff" stroke-width="4"/><path d="M21 25h10" stroke="#fff" stroke-width="3"/></svg></button>
    <button class="task task-open task-current" aria-label="文件资源管理器"><svg width="48" height="46" viewBox="0 0 48 46"><path d="M5 4H18L20 7H44L46 12V42H2V9Z" fill="#f1d87a" stroke="#d5ae45"/><rect x="6" y="1" width="16" height="5" fill="#fff" stroke="#cfae55" stroke-width=".6"/><rect x="7" y="1" width="4" height="4" fill="#2aa159"/><rect x="17" y="4" width="18" height="5" fill="#fff" stroke="#cfae55" stroke-width=".6"/><rect x="18" y="4" width="4" height="4" fill="#e0452b"/><path d="M2 10H24L27 13H46V42H2Z" fill="#f8e68c" stroke="#dab74d"/><rect x="29" y="7" width="16" height="5" fill="#fff" stroke="#cfae55" stroke-width=".6"/><rect x="31" y="7" width="4" height="4" fill="#2490dc"/><path d="M6 45V30Q6 27 9 27H39Q42 27 42 30V45H33V38H16V45Z" fill="#7cc4e6" stroke="#4a9dc6"/></svg></button>
    <button class="task task-open" aria-label="phpStudy"><svg width="48" height="48" viewBox="0 0 72 72"><rect width="72" height="72" rx="10" fill="#1595e9"/><text class="logo-letter" x="15" y="60" font-size="64">P</text></svg></button>
    <div class="tray">
      <button class="tray-more" aria-label="显示隐藏的图标"><svg width="12" height="8"><path d="M0 7L6 0L12 7Z" fill="#fff" stroke="#5d5540" stroke-width=".6"/></svg></button>
      <button aria-label="音量"><svg width="24" height="24"><path d="M1 7H5L11 1V22L5 16H1Z" fill="#fff" stroke="#54492f"/><path d="M5 7V16" stroke="#54492f"/><circle cx="17" cy="17" r="6" fill="#dd1717"/><path d="M15 15L19 19M19 15L15 19" stroke="#fff" stroke-width="2"/></svg></button>
      <button aria-label="网络"><svg width="24" height="24"><g fill="none" stroke="#54492f" stroke-width="4"><path d="M9 4H22V15H7M14 15V20M9 20H20M4 2V8M4 8V22"/></g><g fill="none" stroke="#fff" stroke-width="2"><path d="M9 4H22V15H7M14 15V20M9 20H20M2 2H6V8H2ZM4 8V22"/></g></svg></button>
      <button class="tray-lang">英</button>
      <time>22:31<br>2024/10/28</time>
    </div>
  </footer>
</main>
</body>
</html>
```

FILE: styles.css
```css
* {
  box-sizing: border-box;
}

body {
  margin: 0;
  font: 18px/24px "Noto Sans", "Noto Sans CJK SC", sans-serif;
  color: #000;
}

button,
input {
  margin: 0;
  padding: 0;
  border: 0;
  background: none;
  color: inherit;
  font: inherit;
}

svg {
  flex: none;
}

h1,
h2,
p,
pre {
  margin: 0;
  font-weight: 400;
}

a {
  color: inherit;
  text-decoration: none;
}

.sprite {
  position: absolute;
  width: 0;
  height: 0;
}

/* Desktop */

.desktop {
  position: relative;
  display: flex;
  flex-direction: column;
  justify-content: space-between;
  min-height: 100vh;
  overflow: hidden;
}

.wallpaper {
  position: absolute;
  inset: 0;
  width: 100%;
  height: 100%;
}

.host-info {
  position: absolute;
  top: 56px;
  right: 95px;
  font: 700 36px/82px "Courier New", "Liberation Mono", monospace;
  color: #fff08a;
  text-align: right;
  filter: blur(1px);
}

.shortcuts {
  position: relative;
  display: flex;
  flex-direction: column;
  width: 116px;
  padding-top: 7px;
}

.shortcut {
  display: flex;
  flex-direction: column;
  gap: 3px;
  height: 149px;
  padding: 0 4px;
  color: #fff;
  text-align: center;
  text-shadow: 0 1px 2px rgba(90, 40, 0, .55);
}

.shortcut-icon {
  display: flex;
  align-items: center;
  justify-content: center;
  height: 72px;
}

.shortcut-low {
  align-items: flex-end;
  padding-bottom: 2px;
}

.logo-letter {
  fill: #fff;
  font-family: "Noto Sans", sans-serif;
  font-weight: 500;
}

/* phpStudy panel */

.panel {
  position: absolute;
  top: 75px;
  left: 405px;
  right: 406px;
  display: flex;
  background: #fff;
  border-radius: 2px;
  overflow: hidden;
}

.panel-side {
  width: 300px;
  background: #1595e9;
}

.brand {
  display: flex;
  align-items: center;
  height: 105px;
  padding-left: 42px;
  color: #fff;
}

.brand-xp {
  font-size: 100px;
  line-height: 105px;
  font-weight: 500;
}

.brand-dot {
  align-self: flex-end;
  width: 10px;
  height: 9px;
  margin: 0 22px 15px -16px;
  background: #fff;
}

.brand-sub {
  display: flex;
  flex-direction: column;
  gap: 4px;
  padding-top: 4px;
  font-size: 30px;
  line-height: 38px;
}

.brand-cn {
  display: flex;
  justify-content: space-between;
  font-size: 35px;
}

.side-active {
  height: 90px;
  background: #fff;
}

.panel-main {
  flex: 1;
  display: flex;
  flex-direction: column;
}

.panel-bar {
  display: flex;
  align-items: center;
  justify-content: flex-end;
  gap: 14px;
  height: 56px;
  padding-right: 11px;
  background: #fdfdfd;
  border-top: 1px solid #ddd;
}

.panel-bar svg {
  display: block;
}

.panel-body {
  padding: 15px 10px 11px;
  background: #f7f7f7;
}

.card {
  padding: 15px 10px 9px 15px;
  background: #fff;
}

.card h2 {
  padding-left: 12px;
  border-left: 5px solid #1595e9;
  font-size: 22px;
  line-height: 32px;
}

.card-log {
  height: 751px;
  margin-left: 118px;
  background: #f7f7f7;
}

.panel-foot {
  display: flex;
  align-items: center;
  gap: 42px;
  height: 56px;
  padding: 0 31px 0 30px;
}

.service,
.version {
  display: flex;
  align-items: center;
  gap: 5px;
}

.service {
  font-size: 19px;
}

.version {
  margin-left: auto;
}

/* File browser window */

.explorer {
  position: absolute;
  top: 180px;
  left: 432px;
  right: 322px;
  padding: 0 9px 9px;
  background: #f0c869;
  border: 1px solid #ac8c45;
}

.titlebar {
  display: grid;
  grid-template-columns: 1fr auto 1fr;
  height: 43px;
}

.titlebar h1 {
  padding-right: 34px;
  font-size: 24px;
  line-height: 42px;
  color: #222;
}

.quick {
  display: flex;
  align-items: center;
  gap: 9px;
}

.quick button,
.quick svg {
  display: block;
}

.quick i {
  width: 1px;
  height: 21px;
  background: #8f713a;
}

.quick button + button + button {
  margin: 0 2px 0 3px;
}

.controls {
  display: flex;
  justify-content: flex-end;
  height: 31px;
}

.controls button {
  width: 40px;
}

.controls .close {
  width: 69px;
  background: #c75050;
}

.client {
  background: #fff;
  border: 1px solid #cfa552;
}

.tabs {
  display: flex;
  height: 34px;
}

.tab {
  width: 65px;
  color: #3a3a3a;
}

.tab-file {
  width: 84px;
  background: #1979ca;
  color: #fff;
}

.tab-active {
  position: relative;
  width: 64px;
  height: 35px;
  background: #f5f6f7;
  border-right: 1px solid #dadbdc;
  z-index: 1;
}

.tab-tools {
  display: flex;
  align-items: center;
  gap: 10px;
  margin-left: auto;
  padding-right: 4px;
}

.tab-tools svg {
  display: block;
}

.help {
  width: 22px;
  height: 22px;
  border-radius: 50%;
  background: #1979ca;
  color: #fff;
  font-weight: 600;
  line-height: 22px;
}

/* Ribbon */

.ribbon {
  display: flex;
  height: 145px;
  padding: 3px 0;
  background: #f5f6f7;
  border: solid #dadbdc;
  border-width: 1px 0;
  color: #2b2b2b;
}

.group {
  display: flex;
  flex-direction: column;
  justify-content: space-between;
  border-right: 1px solid #e2e3e4;
}

.group p {
  padding-right: 6px;
  color: #8c8c8c;
  line-height: 22px;
  text-align: center;
}

.group-clip { width: 271px; padding-left: 5px; }
.group-organize { width: 255px; padding-left: 5px; }
.group-new { width: 189px; padding-left: 4px; }
.group-open { width: 163px; padding-left: 3px; }
.group-select { width: 117px; padding-left: 3px; }

.tools {
  display: flex;
}

.big {
  display: flex;
  flex-direction: column;
  align-items: center;
  width: 58px;
  white-space: nowrap;
}

.big > span {
  display: flex;
  align-items: center;
  height: 55px;
}

.big svg {
  margin-left: 2px;
}

.dim {
  color: #8c8c8c;
}

.caret {
  color: #111;
}

.divider {
  width: 1px;
  height: 82px;
  margin: 13px 4px 0;
  background: #dadbdc;
}

.stack {
  display: flex;
  flex-direction: column;
  padding: 1px 0 0 4px;
}

.stack-loose {
  padding-top: 3px;
}

.small {
  display: flex;
  align-items: center;
  gap: 2px;
  height: 30px;
  white-space: nowrap;
}

.stack-loose .small {
  height: 35px;
}

.small .caret {
  margin-left: 4px;
}

.open-column {
  display: flex;
  flex-direction: column;
  width: 84px;
}

.open-column .small {
  padding-left: 4px;
}

/* Address row */

.navbar {
  display: flex;
  align-items: center;
  height: 53px;
  padding: 0 12px 1px 4px;
}

.navbar button {
  display: flex;
  align-items: center;
  justify-content: center;
}

.nav-back { width: 46px; }
.nav-forward { width: 44px; }
.nav-history { width: 22px; }
.nav-up { width: 36px; }

.address {
  flex: 1;
  display: flex;
  align-items: center;
  gap: 13px;
  height: 30px;
  padding-left: 3px;
  border: 1px solid #d9d9d9;
}

.crumb-arrow {
  color: #6d6d6d;
}

.address-end {
  display: flex;
  gap: 6px;
  align-self: stretch;
  margin-left: auto;
}

.refresh {
  width: 33px;
  border-left: 1px solid #d9d9d9;
}

.address-end .refresh {
  border-left: 1px solid #d9d9d9;
}

.search {
  display: flex;
  align-items: center;
  width: 148px;
  height: 30px;
  margin-left: 12px;
  padding: 0 12px 0 10px;
  border: 1px solid #d9d9d9;
}

.search input {
  flex: 1;
  min-width: 0;
}

.search input::placeholder {
  color: #6d6d6d;
  opacity: 1;
}

/* Content */

.content {
  display: flex;
}

.tree {
  display: flex;
  flex-direction: column;
  width: 238px;
  padding: 8px 2px 0;
  border-right: 1px solid #f0f0f0;
}

.tree a {
  display: flex;
  align-items: center;
  gap: 4px;
  height: 31px;
  padding-left: 28px;
}

.tree .child {
  padding-left: 38px;
}

.tree .tree-root {
  margin-top: 31px;
  padding-left: 27px;
  border: 1px solid transparent;
}

.tree .tree-current {
  background: #f7f7f7;
  border-color: #dedede;
}

.listing {
  flex: 1;
  padding: 0 0 6px 23px;
}

table {
  width: 867px;
  border-spacing: 0;
  table-layout: fixed;
}

.c-name { width: 387px; }
.c-date { width: 180px; }
.c-type { width: 180px; }
.c-size { width: 115px; }
.c-end { width: 5px; }

th {
  height: 49px;
  padding: 0;
  color: #4c607a;
  font-weight: 400;
  text-align: left;
  vertical-align: top;
}

th div {
  position: relative;
  height: 36px;
  padding-left: 9px;
  border-right: 1px solid #e3e8ee;
  line-height: 40px;
}

th:first-child div {
  padding-left: 5px;
}

.sort {
  position: absolute;
  top: 1px;
  left: 48%;
}

td {
  height: 31px;
  padding: 0 0 0 9px;
  color: #6d6d6d;
  white-space: nowrap;
}

td:first-child {
  position: relative;
  padding-left: 6px;
  color: #000;
}

td:first-child svg {
  margin-right: 6px;
  vertical-align: -5px;
}

td:nth-child(2) {
  font-size: 19px;
}

td:nth-child(4) {
  padding-right: 7px;
  text-align: right;
}

.selected td {
  background: #d1e8ff;
  border: solid #66a7e8;
  border-width: 1px 0;
}

.selected td:first-child {
  border-left-width: 1px;
  padding-left: 5px;
}

.selected td:last-child {
  border-right-width: 1px;
  padding-right: 6px;
}

.marker {
  position: absolute;
  z-index: 2;
  top: -14px;
  left: -11px;
  width: 913px;
  height: 55px;
  border: 5px solid #f00;
  border-radius: 4px;
}

/* Status bar */

.status {
  display: flex;
  align-items: center;
  height: 35px;
  padding-left: 6px;
  color: #1e395b;
  font-size: 19px;
}

.status-cell {
  padding: 0 16px;
  border-right: 1px solid #ececec;
  line-height: 18px;
}

.status-cell span {
  margin-left: 10px;
}

.views {
  display: flex;
  gap: 6px;
  height: 35px;
  margin-left: auto;
  padding-right: 14px;
}

.views button,
.tray button,
.task {
  display: flex;
  align-items: center;
  justify-content: center;
}

.views .view-on {
  width: 34px;
  background: #cbe8f6;
  border: 1px solid #26a0da;
}

/* Taskbar */

.taskbar {
  position: relative;
  display: flex;
  height: 56px;
  background: rgba(148, 121, 71, .56);
  border-top: 1px solid rgba(90, 70, 30, .4);
}

.task {
  width: 84px;
}

.task-start {
  width: 70px;
}

.task-open {
  width: 81px;
  margin-left: 2px;
  border: 1px solid rgba(255, 235, 190, .5);
  background: rgba(255, 220, 160, .15);
}

.task-current {
  border: 2px solid #fff;
  background: rgba(255, 225, 205, .45);
}

.tray {
  display: flex;
  margin-left: auto;
  padding-right: 10px;
  color: #fff;
}

.tray button {
  width: 37px;
}

.tray .tray-more {
  width: 44px;
}

.tray-lang {
  font-size: 24px;
  text-shadow: 0 0 2px #3c3218;
}

.tray time {
  width: 110px;
  padding-top: 4px;
  font-size: 19px;
  line-height: 25px;
  text-align: center;
}
```
